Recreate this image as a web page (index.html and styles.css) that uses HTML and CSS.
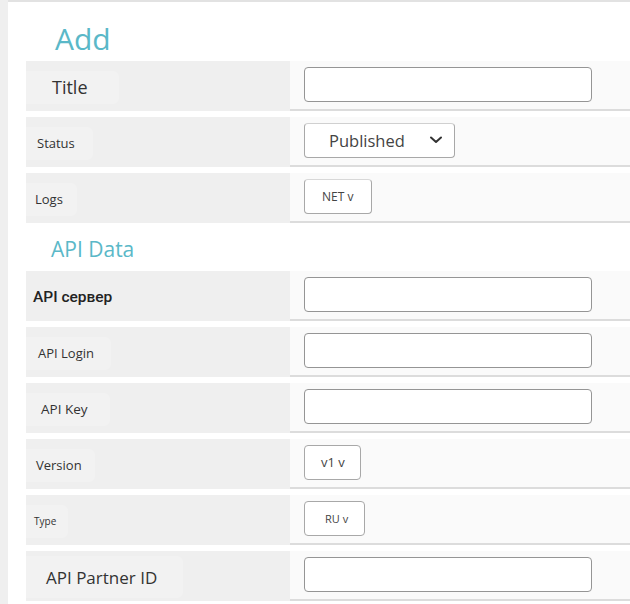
FILE: index.html
```html
<!DOCTYPE html>
<html>
<head>
<meta charset="utf-8">
<link rel="stylesheet" href="styles.css">
</head>
<body>
<div class="page">
  <main class="panel">
    <h1 class="heading">Add</h1>
    <div class="row">
      <div class="label"><span class="tag tag-title">Title</span></div>
      <div class="field"><input class="text-input" type="text"></div>
    </div>
    <div class="row">
      <div class="label"><span class="tag tag-status">Status</span></div>
      <div class="field">
        <div class="select">
          <span class="select-text">Published</span>
          <svg class="chevron" width="14" height="10" viewBox="0 0 14 10"><path d="M2 2.5 L7 7 L12 2.5" fill="none" stroke="#333" stroke-width="2" stroke-linecap="round" stroke-linejoin="round"/></svg>
        </div>
      </div>
    </div>
    <div class="row">
      <div class="label"><span class="tag tag-logs">Logs</span></div>
      <div class="field"><div class="mini mini-net">NET v</div></div>
    </div>

    <h2 class="subheading">API Data</h2>
    <div class="row">
      <div class="label"><span class="tag tag-server">API сервер</span></div>
      <div class="field"><input class="text-input" type="text"></div>
    </div>
    <div class="row">
      <div class="label"><span class="tag tag-login">API Login</span></div>
      <div class="field"><input class="text-input" type="text"></div>
    </div>
    <div class="row">
      <div class="label"><span class="tag tag-key">API Key</span></div>
      <div class="field"><input class="text-input" type="text"></div>
    </div>
    <div class="row">
      <div class="label"><span class="tag tag-version">Version</span></div>
      <div class="field"><div class="mini mini-v1">v1 v</div></div>
    </div>
    <div class="row">
      <div class="label"><span class="tag tag-type">Type</span></div>
      <div class="field"><div class="mini mini-ru">RU v</div></div>
    </div>
    <div class="row">
      <div class="label"><span class="tag tag-partner">API Partner ID</span></div>
      <div class="field"><input class="text-input" type="text"></div>
    </div>
  </main>
</div>
</body>
</html>
```

FILE: styles.css
```css
* { box-sizing: border-box; }
html, body { margin: 0; padding: 0; }
body {
  background: #efefef;
  font-family: "Open Sans", "Liberation Sans", sans-serif;
  color: #333;
  width: 630px;
  height: 604px;
  overflow: hidden;
}
.page {
  padding-left: 8px;
  height: 604px;
}
.panel {
  background: #fff;
  border-top: 2px solid #e2e2e2;
  height: 100%;
  padding: 0 0 0 18px;
  display: flex;
  flex-direction: column;
  gap: 6px;
}
.heading {
  margin: 0;
  font-weight: 400;
  font-size: 30px;
  line-height: 30px;
  color: #5ab8c8;
  padding: 22px 0 0 29px;
  height: 53px;
  flex-shrink: 0;
}
.subheading {
  margin: 0;
  font-weight: 400;
  font-size: 21px;
  line-height: 24px;
  color: #5ab8c8;
  padding: 8px 0 0 25px;
  height: 36px;
  flex-shrink: 0;
}
.row {
  display: flex;
  height: 50px;
  flex-shrink: 0;
}
.label {
  width: 264px;
  background: #efefef;
  display: flex;
  align-items: center;
}
.field {
  flex: 1;
  background: #fafafa;
  border-bottom: 2px solid #dcdcdc;
  display: flex;
  align-items: center;
  padding-left: 14px;
}
.tag {
  display: flex;
  align-items: center;
  height: 33px;
  background: #f2f2f2;
  border-radius: 0 6px 6px 0;
  color: #333;
  margin-top: 2px;
}
.tag-title { font-size: 18px; padding: 0 26px; width: 93px; }
.tag-status { font-size: 13px; padding: 0 11px; width: 67px; }
.tag-logs { font-size: 13px; padding: 0 9px; width: 51px; }
.tag-server {
  font-family: Roboto, "Liberation Sans", sans-serif;
  font-weight: 500;
  font-size: 15.5px;
  padding: 0 7px;
  background: transparent;
  color: #222;
}
.tag-login { font-size: 13px; padding: 0 12px; width: 85px; }
.tag-key { font-size: 13.5px; padding: 0 15px; width: 84px; }
.tag-version { font-size: 13px; padding: 0 10px; width: 69px; }
.tag-type { font-size: 10px; padding: 0 8px; width: 42px; }
.tag-partner { font-size: 17px; padding: 0 20px; width: 157px; height: 42px; }

.text-input {
  width: 288px;
  height: 35px;
  border: 1px solid #959595;
  border-radius: 4px;
  background: #fff;
  margin: 0 0 2px 0;
  padding: 0;
  outline: none;
}
.select {
  width: 151px;
  height: 35px;
  border: 1px solid #a8a8a8;
  border-top-color: #d0d0d0;
  border-radius: 4px;
  background: #fff;
  display: flex;
  align-items: center;
  padding-left: 24px;
  margin-bottom: 2px;
}
.select-text {
  font-size: 16.5px;
  color: #444;
  flex: 1;
}
.chevron { margin-right: 11px; }
.mini {
  height: 35px;
  border: 1px solid #a8a8a8;
  border-radius: 4px;
  background: #fff;
  display: flex;
  align-items: center;
  color: #444;
  margin-bottom: 2px;
}
.mini-net { width: 68px; font-size: 12px; padding-left: 17px; border-top-color: #d8d8d8; }
.mini-v1 { width: 57px; font-size: 13px; padding-left: 16px; }
.mini-ru { width: 61px; font-size: 11px; padding-left: 20px; }
```
